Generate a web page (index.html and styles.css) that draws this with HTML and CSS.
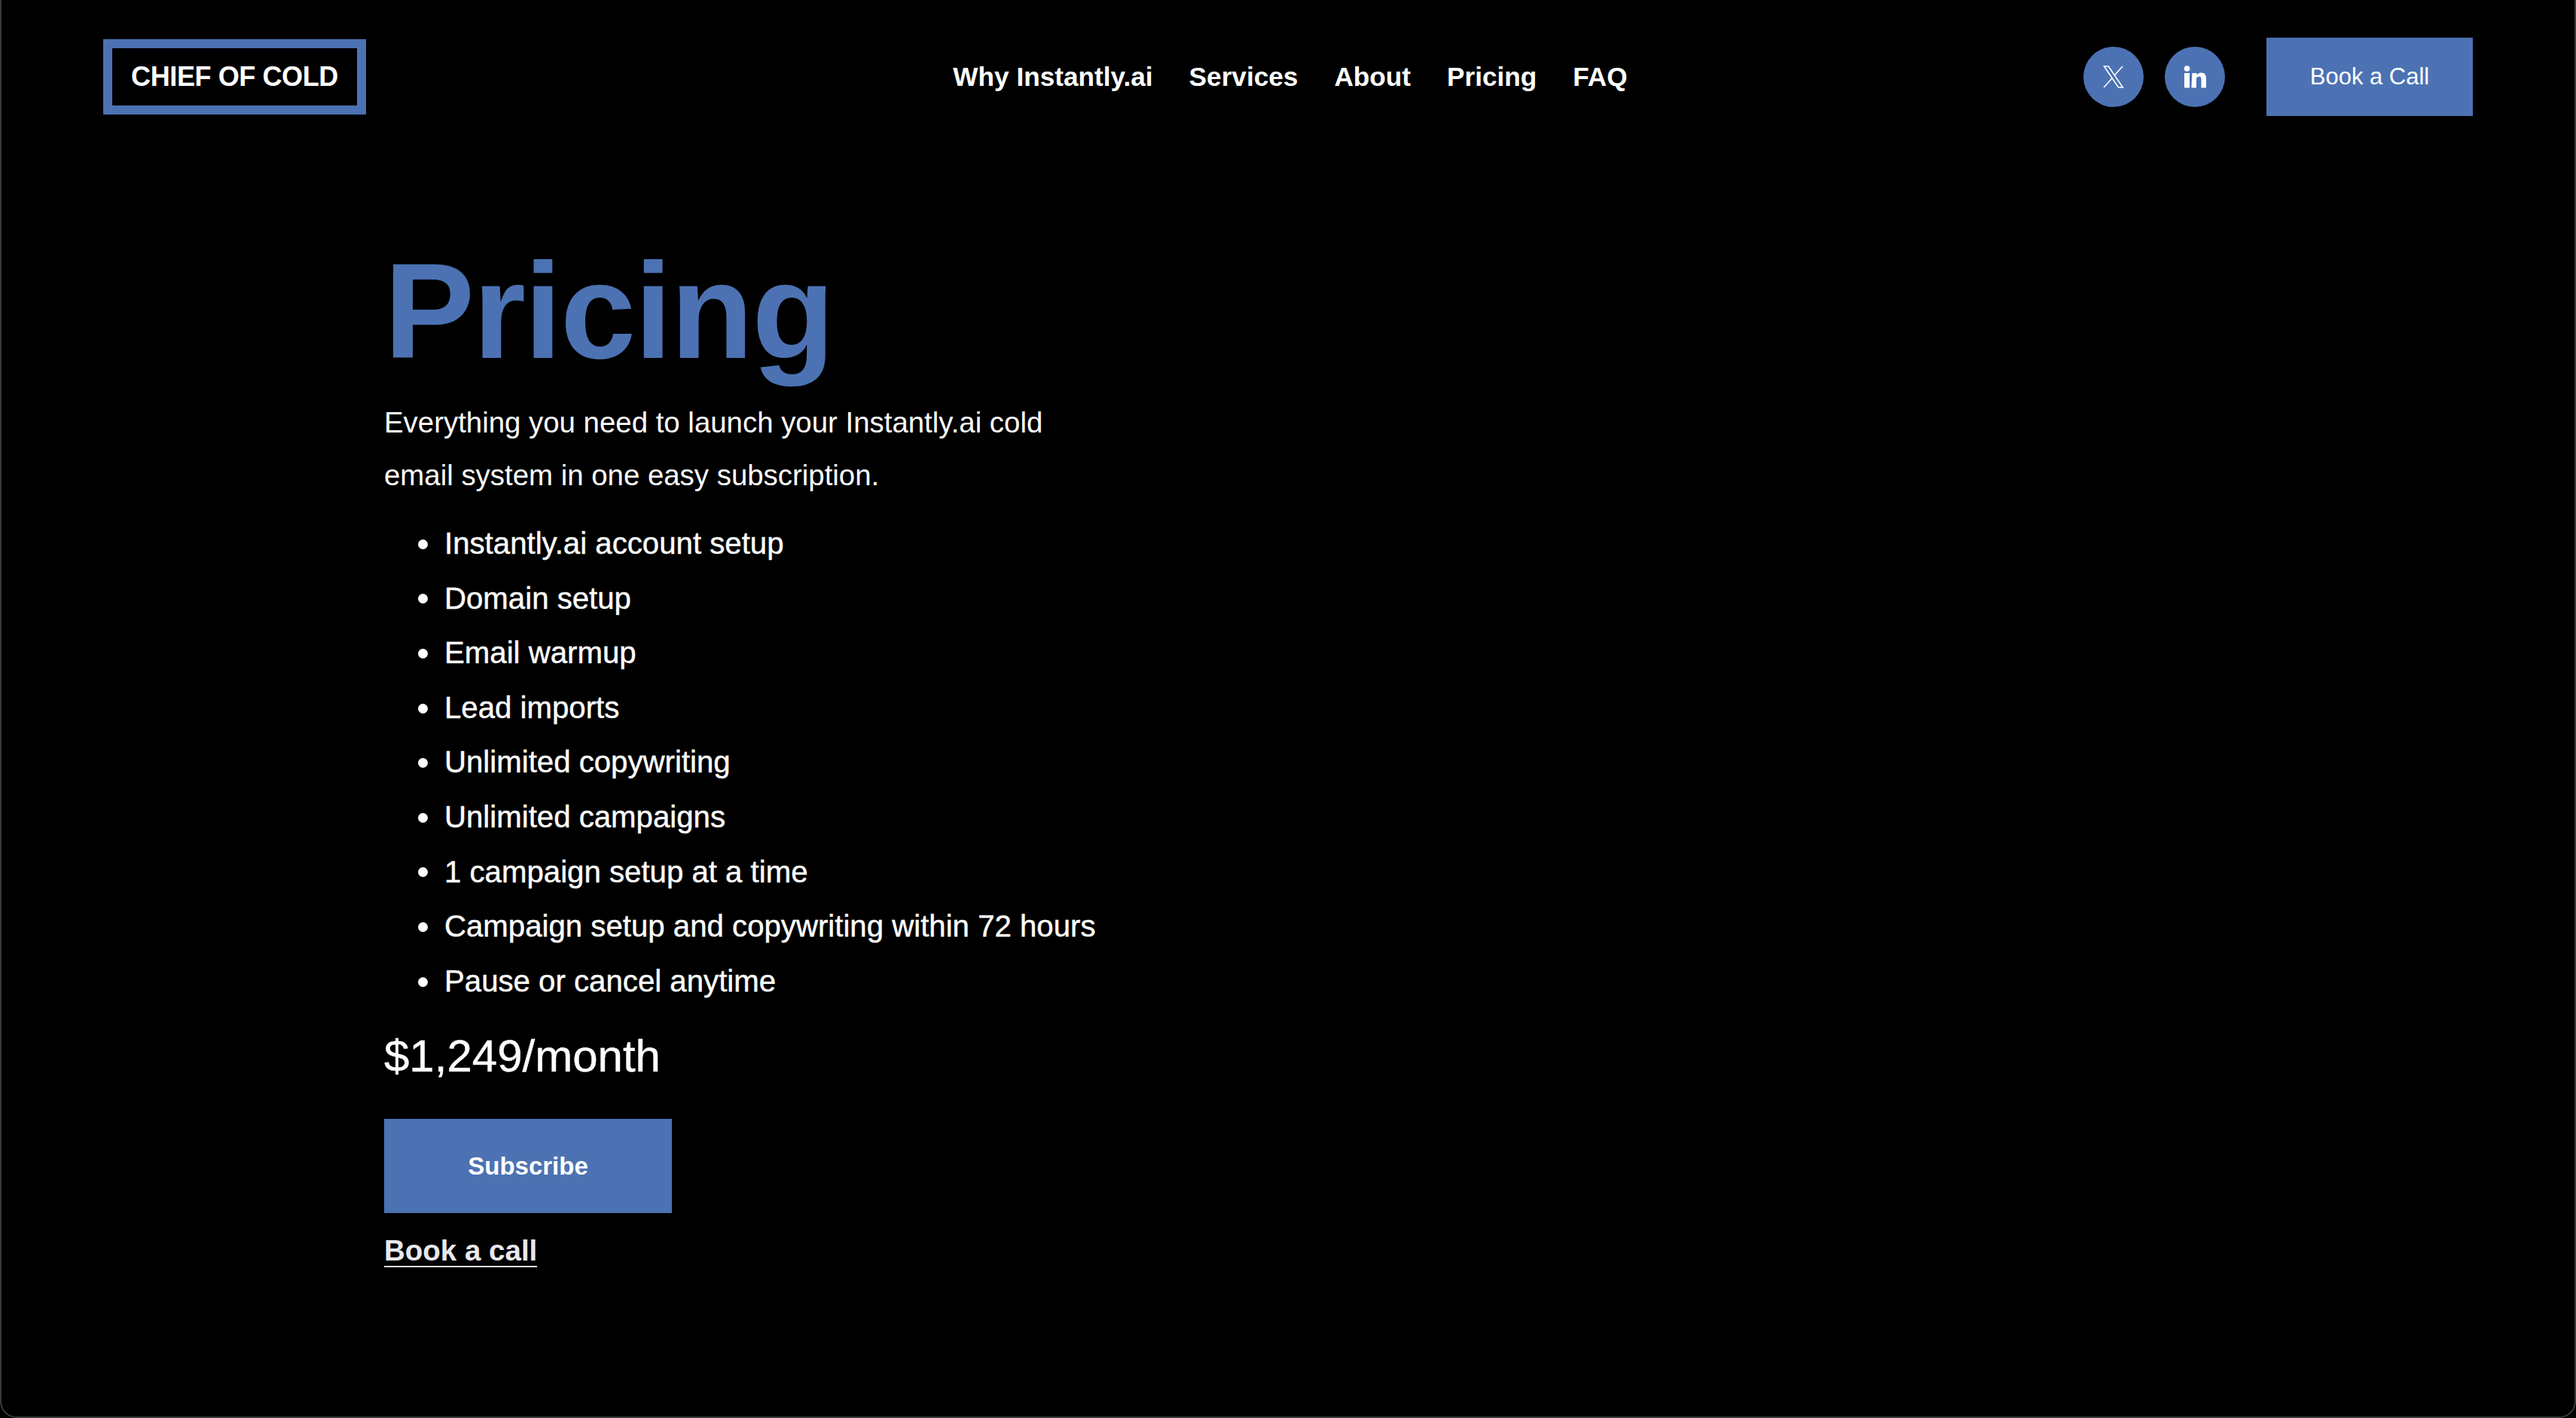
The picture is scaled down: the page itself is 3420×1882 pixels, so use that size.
FILE: index.html
```html
<!DOCTYPE html>
<html lang="en">
<head>
<meta charset="utf-8">
<title>Pricing - Chief of Cold</title>
<link rel="stylesheet" href="styles.css">
</head>
<body>
<div class="frame">
  <header class="nav">
    <a class="logo">CHIEF OF COLD</a>
    <nav class="links">
      <a>Why Instantly.ai</a>
      <a>Services</a>
      <a>About</a>
      <a>Pricing</a>
      <a>FAQ</a>
    </nav>
    <div class="actions">
      <a class="social"><svg width="28" height="30" viewBox="0 0 28 30" fill="none" stroke="#fff" stroke-width="1.6"><path d="M1.500 1h5.800l19 28h-5.800z"/><path d="M26 1L15.600 12.800M11.800 17L1.200 29"/></svg></a>
      <a class="social"><svg width="30" height="30" viewBox="0 0 30 30" fill="#fff"><rect x="1" y="10" width="7" height="19.500"/><circle cx="4.500" cy="4" r="3.800"/><path d="M11.400 10h6.200v2.700c1-1.800 3-3.200 5.800-3.200 5.200 0 6.600 3.400 6.600 8v12h-6.500V18.800c0-2.500-.6-4.300-2.900-4.300-2.600 0-3.700 1.800-3.700 4.300v10.700h-6.500z"/></svg></a>
      <a class="cta">Book a Call</a>
    </div>
  </header>
  <main class="content">
    <h1>Pricing</h1>
    <p class="intro">Everything you need to launch your Instantly.ai cold email system in one easy subscription.</p>
    <ul class="features">
      <li>Instantly.ai account setup</li>
      <li>Domain setup</li>
      <li>Email warmup</li>
      <li>Lead imports</li>
      <li>Unlimited copywriting</li>
      <li>Unlimited campaigns</li>
      <li>1 campaign setup at a time</li>
      <li>Campaign setup and copywriting within 72 hours</li>
      <li>Pause or cancel anytime</li>
    </ul>
    <div class="price">$1,249/month</div>
    <a class="subscribe">Subscribe</a>
    <a class="call">Book a call</a>
  </main>
</div>
</body>
</html>
```
FILE: styles.css
```css
* { box-sizing: border-box; }
html, body { margin: 0; height: 100%; background: #000; }
body { font-family: "Liberation Sans", Arial, sans-serif; color: #fff; }
.frame { height: 1882px; background: #000; border: 2px solid #3a3a3a; border-top: 0; border-radius: 0 0 22px 22px; padding: 50px 135px 0; overflow: hidden; }
.nav { display: flex; align-items: center; justify-content: space-between; height: 104px; }
.logo { display: flex; align-items: center; justify-content: center; width: 349px; height: 100px; border: 12px solid #4c72b3; font-size: 36px; font-weight: 700; letter-spacing: -0.4px; }
.links { display: flex; gap: 48px; margin-left: 174px; font-size: 35.2px; font-weight: 700; }
.actions { display: flex; align-items: center; gap: 28px; }
.social { display: flex; align-items: center; justify-content: center; width: 80px; height: 80px; border-radius: 50%; background: #4c72b3; }
.cta { display: flex; align-items: center; justify-content: center; width: 274px; height: 104px; margin-left: 27px; background: #4c72b3; font-size: 31px; }
.content { padding-left: 373px; padding-top: 160px; }
h1 { margin: 0; font-size: 180px; line-height: 198px; font-weight: 700; color: #4c72b3; letter-spacing: -2px; }
.intro { margin: 14px 0 0; width: 900px; font-size: 38.4px; line-height: 70px; }
.features { margin: 20px 0 0; padding: 0 0 0 45px; font-size: 40.2px; line-height: 72.6px; list-style: none; -webkit-text-stroke: 0.4px #fff; }
.features li { display: flex; align-items: center; gap: 22px; }
.features li::before { content: ""; width: 13px; height: 13px; border-radius: 50%; background: #fff; }
.price { margin-top: 23px; font-size: 60px; line-height: 80px; -webkit-text-stroke: 0.4px #fff; }
.subscribe { display: flex; align-items: center; justify-content: center; width: 382px; height: 125px; margin-top: 43px; background: #4c72b3; font-size: 33px; font-weight: 700; }
.call { display: inline-block; margin-top: 29px; font-size: 38.5px; line-height: 41px; font-weight: 700; color: #e8e8ee; border-bottom: 2px solid #e8e8ee; }
```
